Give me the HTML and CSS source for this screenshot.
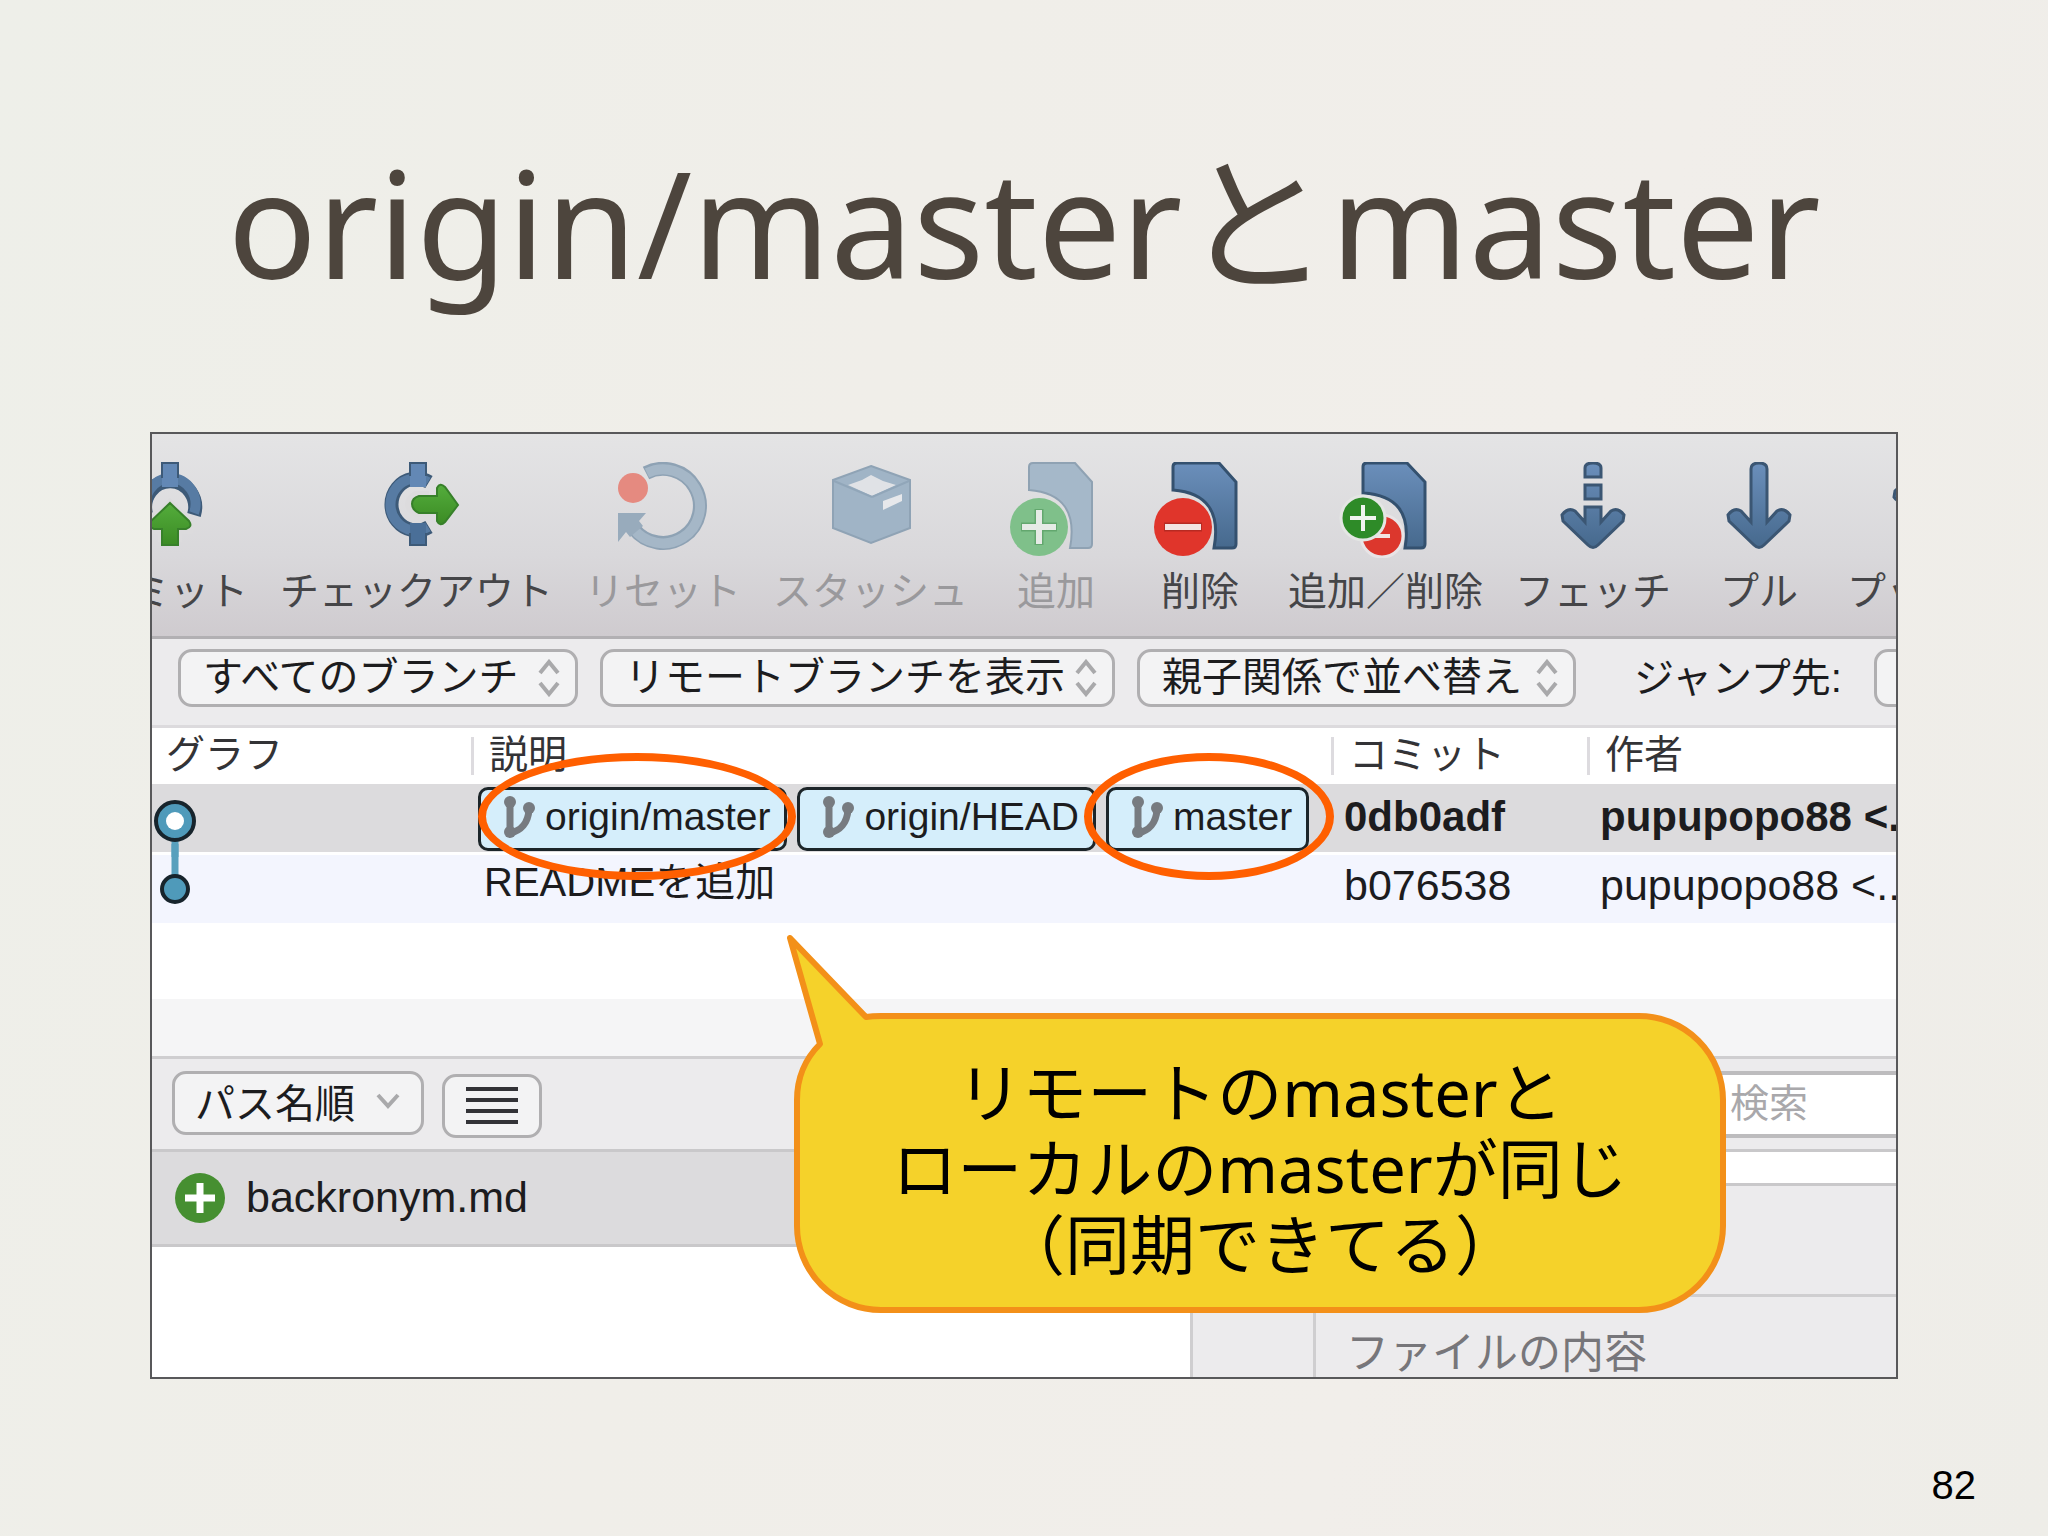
FILE: index.html
```html
<!DOCTYPE html>
<html lang="ja">
<head>
<meta charset="utf-8">
<title>origin/masterとmaster</title>
<link rel="stylesheet" href="styles.css">
</head>
<body>
<svg class="defs" aria-hidden="true">
  <defs>
    <linearGradient id="steel" x1="0" y1="0" x2="0" y2="1"><stop offset="0" stop-color="#6b8fbb"/><stop offset="1" stop-color="#46698d"/></linearGradient>
    <linearGradient id="leaf" x1="0" y1="0" x2="0" y2="1"><stop offset="0" stop-color="#54ad3c"/><stop offset="1" stop-color="#3b8b24"/></linearGradient>
    <symbol id="branch" viewBox="0 0 32 44">
      <path d="M7 7V36M7 38C18 36 25 28 26 15" fill="none" stroke="#777b80" stroke-width="7"/>
      <circle cx="7" cy="7" r="6" fill="#777b80"/><circle cx="26" cy="13" r="6" fill="#777b80"/><circle cx="7" cy="37" r="6" fill="#777b80"/>
    </symbol>
    <symbol id="updown" viewBox="0 0 24 38">
      <path d="M3 14L12 3L21 14M3 24L12 35L21 24" fill="none" stroke="#a9a9ab" stroke-width="4"/>
    </symbol>
  </defs>
</svg>
<main class="slide">
  <h1 class="title">origin/masterとmaster</h1>

  <section class="window">
    <div class="toolbar">
      <button class="tool">
        <svg class="icon" viewBox="0 0 96 96"><path d="M24 52A25 26 0 1 1 72 53" fill="none" stroke="#3d5a78" stroke-width="14"/><path d="M25 51A25 26 0 1 1 72 51" fill="none" stroke="#577ba3" stroke-width="10"/><path d="M40 1h16v24H40z" fill="#6388b5"/><path d="M40 16V1H56V16" fill="none" stroke="#3d5a78" stroke-width="2"/><path d="M48 36L76 63L70 72H60V80H36V72H26L20 63Z" fill="#dcdbdd"/><path d="M48 41L67 59Q71 65 64 67H56V83H40V67H32Q25 65 29 59Z" fill="url(#leaf)" stroke="#37802a" stroke-width="2"/></svg>
        <span>コミット</span>
      </button>
      <button class="tool">
        <svg class="icon" viewBox="0 0 96 96"><path d="M60 20A25 26 0 1 0 60 65" fill="none" stroke="#3d5a78" stroke-width="14"/><path d="M59 20A25 26 0 1 0 59 65" fill="none" stroke="#577ba3" stroke-width="10"/><path d="M41 1h16v24H41z" fill="#6388b5"/><path d="M41 61h16v22H41z" fill="#4a6f98"/><path d="M41 14V1H57V14M41 71V83H57V71" fill="none" stroke="#3d5a78" stroke-width="2"/><path d="M60 29H46Q36 34 36 42T46 55H60Z" fill="#dcdbdd"/><path d="M68 34H50Q43 36 43 42T50 51H68V59Q71 65 76 60L89 43L76 25Q71 20 68 26Z" fill="url(#leaf)" stroke="#37802a" stroke-width="2"/></svg>
        <span>チェックアウト</span>
      </button>
      <button class="tool" disabled>
        <svg class="icon" viewBox="0 0 96 96"><circle cx="18" cy="26" r="15" fill="#e58a80"/><path d="M31 11A37 37 0 1 1 19 67" fill="none" stroke="#8ea2b4" stroke-width="14"/><path d="M32 11A37 37 0 1 1 18 66" fill="none" stroke="#a5b7c7" stroke-width="10"/><path d="M3 51H31L24 59L28 64L15 75L11 70L3 80Z" fill="#98abbc"/></svg>
        <span>リセット</span>
      </button>
      <button class="tool" disabled>
        <svg class="icon" viewBox="0 0 96 96"><path d="M48 4L87 18V66L48 81L10 66V18Z" fill="#a0b4c6" stroke="#8fa3b5" stroke-width="2"/><path d="M25 23L39 18L48 13L60 19L73 23L49 34Z" fill="#e0e2e6"/><path d="M49 35L11 19M49 35L86 19" stroke="#91a6b9" stroke-width="2"/><path d="M60 39L79 32V39L60 48Z" fill="#e7e8eb"/></svg>
        <span>スタッシュ</span>
      </button>
      <button class="tool" disabled>
        <svg class="icon" viewBox="0 0 96 96"><path d="M21 28V5Q21 1 25 1H67L84 20V82Q84 86 80 86H62Q72 32 21 28Z" fill="#a5b8c9" stroke="#8fa2b3" stroke-width="2"/><circle cx="31" cy="65" r="29" fill="#7fc08a"/><path d="M31 47V83M13 65H49" stroke="#63a76e" stroke-width="9"/><path d="M31 48V82M14 65H48" stroke="#e6ebe6" stroke-width="6"/></svg>
        <span>追加</span>
      </button>
      <button class="tool">
        <svg class="icon" viewBox="0 0 96 96"><path d="M21 28V5Q21 1 25 1H67L84 20V82Q84 86 80 86H62Q72 32 21 28Z" fill="url(#steel)" stroke="#34516f" stroke-width="3"/><circle cx="31" cy="65" r="29" fill="#e0352b"/><path d="M12 65H50" stroke="#b72a22" stroke-width="9"/><path d="M13 65H49" stroke="#f3e4e2" stroke-width="6"/></svg>
        <span>削除</span>
      </button>
      <button class="tool">
        <svg class="icon" viewBox="0 0 96 96"><path d="M25 31V5Q25 1 29 1H69L87 20V82Q87 86 83 86H67Q76 34 25 31Z" fill="url(#steel)" stroke="#34516f" stroke-width="3"/><circle cx="44" cy="74" r="21" fill="#dc372d" stroke="#e8e4e6" stroke-width="3"/><path d="M36 74H52" stroke="#f3e4e2" stroke-width="4"/><circle cx="25" cy="56" r="22" fill="#2e8b28" stroke="#e4e6e4" stroke-width="3"/><path d="M25 43V69M12 56H38" stroke="#f0f5f0" stroke-width="4"/></svg>
        <span>追加／削除</span>
      </button>
      <button class="tool">
        <svg class="icon" viewBox="0 0 96 96"><path d="M40 15V6Q40 1 48 1T56 6V15ZM40 23h16v14H40zM40 45H56V60L66 49Q73 45 79 53L78 59L53 83Q48 88 43 83L18 59L17 53Q23 45 30 49L40 60Z" fill="url(#steel)" stroke="#3b5673" stroke-width="3"/></svg>
        <span>フェッチ</span>
      </button>
      <button class="tool">
        <svg class="icon" viewBox="0 0 96 96"><path d="M40 7Q40 1 48 1T56 7V60L66 49Q73 45 79 53L78 59L53 83Q48 88 43 83L18 59L17 53Q23 45 30 49L40 60Z" fill="url(#steel)" stroke="#3b5673" stroke-width="3"/></svg>
        <span>プル</span>
      </button>
      <button class="tool">
        <svg class="icon" viewBox="0 0 96 96"><path d="M40 81Q40 87 48 87T56 81V28L66 39Q73 43 79 35L78 29L53 5Q48 0 43 5L18 29L17 35Q23 43 30 39L40 28Z" fill="url(#steel)" stroke="#3b5673" stroke-width="3"/></svg>
        <span>プッシュ</span>
      </button>
    </div>

    <div class="filters">
      <div class="picker"><select aria-label="ブランチ"><option>すべてのブランチ</option></select><svg class="chevron"><use href="#updown"/></svg></div>
      <div class="picker wide"><select aria-label="リモート"><option>リモートブランチを表示</option></select><svg class="chevron"><use href="#updown"/></svg></div>
      <div class="picker medium"><select aria-label="並べ替え"><option>親子関係で並べ替え</option></select><svg class="chevron"><use href="#updown"/></svg></div>
      <label class="jump" for="jump">ジャンプ先:</label>
      <input class="jump-field" id="jump" type="text">
    </div>

    <table class="log">
      <colgroup><col class="col-graph"><col><col class="col-commit"><col class="col-author"></colgroup>
      <thead>
        <tr><th>グラフ</th><th>説明</th><th>コミット</th><th>作者</th></tr>
      </thead>
      <tbody>
        <tr class="selected">
          <td class="graph"><svg viewBox="0 0 46 66"><path d="M23 36V72" stroke="#58a0bd" stroke-width="7"/><circle cx="23" cy="36" r="19" fill="#4f9aba" stroke="#17242c" stroke-width="4"/><circle cx="23" cy="36" r="9" fill="#fff"/></svg></td>
          <td class="refs"><div class="tags">
            <span class="tag ringed"><svg><use href="#branch"/></svg>origin/master</span>
            <span class="tag"><svg><use href="#branch"/></svg>origin/HEAD</span>
            <span class="tag ringed ringed-wide"><svg><use href="#branch"/></svg>master</span>
          </div></td>
          <td>0db0adf</td>
          <td>pupupopo88 &lt;...</td>
        </tr>
        <tr class="striped">
          <td class="graph"><svg viewBox="0 0 46 66"><path d="M23 -12V34" stroke="#58a0bd" stroke-width="7"/><circle cx="23" cy="33" r="13" fill="#4f9aba" stroke="#17242c" stroke-width="4"/></svg></td>
          <td class="message">READMEを追加</td>
          <td>b076538</td>
          <td>pupupopo88 &lt;...</td>
        </tr>
      </tbody>
    </table>
    <div class="blank"></div>
    <div class="strip"></div>

    <div class="filebar">
      <button class="sort">パス名順<svg viewBox="0 0 26 20"><path d="M3 4L13 15L23 4" fill="none" stroke="#a9a9ab" stroke-width="4"/></svg></button>
      <button class="list" aria-label="一覧"><svg viewBox="0 0 52 40"><path d="M0 3H52M0 14H52M0 25H52M0 36H52" stroke="#333337" stroke-width="4"/></svg></button>
      <input class="search" type="search" placeholder="検索" aria-label="検索">
    </div>

    <div class="panes">
      <div class="files">
        <div class="file"><svg viewBox="0 0 52 52"><circle cx="26" cy="26" r="25" fill="#468f31"/><path d="M26 11V41M11 26H41" stroke="#fff" stroke-width="7"/></svg>backronym.md</div>
      </div>
      <div class="detail">
        <div class="detail-gap"></div>
        <div class="detail-head"></div>
        <div class="detail-body"><div class="content">ファイルの内容</div></div>
      </div>
    </div>

    <div class="callout">
      <svg class="bubble" viewBox="0 0 932 300"><path d="M72 4Q78 3 87 3H845A84 84 0 0 1 929 87V213A84 84 0 0 1 845 297H87A84 84 0 0 1 3 213V87Q3 54 26 31L-4 -75Z" fill="#f5d22a" stroke="#f39019" stroke-width="6" stroke-linejoin="round"/></svg>
      <p>リモートのmasterと<br>ローカルのmasterが同じ<br>（同期できてる）</p>
    </div>
  </section>

  <footer class="page-number">82</footer>
</main>
</body>
</html>
```
FILE: styles.css
```css
* {
  box-sizing: border-box;
}

body {
  margin: 0;
  background: linear-gradient(105deg, #eeefe9 0%, #f0eee9 40%, #f1eeea 70%, #eeede8 100%);
  color: #1c1c1e;
  font-family: "Liberation Sans", "Noto Sans CJK JP", sans-serif;
  font-size: 39px;
}

button,
input,
select {
  margin: 0;
  color: inherit;
  font: inherit;
}

.defs {
  position: absolute;
  width: 0;
  height: 0;
}

.slide {
  display: flex;
  flex-direction: column;
  min-height: 100vh;
  padding: 0 150px;
}

.title {
  margin: 0;
  padding-top: 115px;
  height: 432px;
  color: #4d453d;
  font-family: "Noto Sans", "Noto Sans CJK JP", sans-serif;
  font-size: 148px;
  font-weight: 400;
  line-height: 214px;
  text-align: center;
  white-space: nowrap;
}

.window {
  position: relative;
  overflow: hidden;
  border: 2px solid #58585a;
  background: #fff;
}

/* Toolbar */

.toolbar {
  display: flex;
  gap: 32px;
  height: 205px;
  padding: 28px 0 0;
  border-bottom: 3px solid #b2b0b3;
  background: linear-gradient(#e4e4e5, #d9d8db 60%, #cfcbcf);
}

.tool {
  display: flex;
  flex: none;
  flex-direction: column;
  align-items: center;
  justify-content: flex-start;
  min-width: 112px;
  padding: 0;
  border: 0;
  background: none;
  color: #454548;
  line-height: 68px;
  white-space: nowrap;
}

.tool:first-child {
  margin-left: -60px;
}

.tool:disabled {
  color: #9a999c;
}

.icon {
  width: 96px;
  height: 96px;
}

/* Filters */

.filters {
  display: flex;
  align-items: flex-start;
  gap: 22px;
  height: 89px;
  padding: 10px 0 0 26px;
  border-bottom: 3px solid #dcdadd;
  background: #ecebed;
}

.picker {
  position: relative;
  flex: none;
  width: 400px;
}

.picker.wide {
  width: 515px;
}

.picker.medium {
  width: 439px;
}

.picker select {
  width: 100%;
  height: 58px;
  padding: 0 0 2px 22px;
  border: 3px solid #b0afb1;
  border-radius: 14px;
  background: #f3f3f4;
  appearance: none;
}

.chevron {
  position: absolute;
  top: 10px;
  right: 17px;
  width: 24px;
  height: 38px;
  pointer-events: none;
}

.jump {
  flex: none;
  margin-left: 36px;
  line-height: 58px;
}

.jump-field {
  flex: none;
  width: 300px;
  height: 58px;
  margin-left: 10px;
  border: 3px solid #b0afb1;
  border-radius: 14px;
  background: #f3f3f4;
}

.picker select,
.jump {
  font-size: 40px;
}

/* Commit log */

.log {
  width: 100%;
  table-layout: fixed;
  border-collapse: collapse;
}

.col-graph {
  width: 319px;
}

.col-commit {
  width: 256px;
}

.col-author {
  width: 309px;
}

.log th {
  height: 56px;
  padding: 0 0 2px 18px;
  background: linear-gradient(#dddbdf, #dddbdf) left center / 3px 38px no-repeat;
  color: #333336;
  font-weight: 400;
  line-height: 54px;
  text-align: left;
}

.log th:first-child {
  padding-left: 14px;
  background: none;
}

.log td {
  height: 69px;
  padding: 0 0 0 13px;
  font-size: 42px;
  line-height: 60px;
  white-space: nowrap;
}

.log .selected td {
  padding-bottom: 2px;
  border-bottom: 3px solid #fff;
  background: #dcdbdd;
  background-clip: padding-box;
  font-weight: 700;
}

.log .striped td {
  padding-bottom: 8px;
  background: #f3f5fe;
  font-size: 43px;
}

.log .selected .graph,
.log .striped .graph {
  padding: 0;
}

.graph svg {
  display: block;
  width: 46px;
  height: 66px;
  overflow: visible;
}

.log .striped .message {
  padding: 0 0 14px 13px;
  font-size: 40px;
  line-height: 52px;
}

.log .selected .refs {
  padding: 2px 0 0 7px;
}

.tags {
  display: flex;
  gap: 10px;
}

.tag {
  position: relative;
  display: flex;
  align-items: center;
  gap: 10px;
  height: 64px;
  padding: 0 14px 4px 22px;
  border: 3px solid #1c2529;
  border-radius: 10px;
  background: #d5eefb;
  font-size: 39px;
  font-weight: 400;
}

.tag svg {
  width: 32px;
  height: 44px;
}

/* Rings around the two matching branches */

.ringed::after {
  content: "";
  position: absolute;
  z-index: 2;
  inset: -37px -12px -32px -3px;
  border: 8px solid #ff5f00;
  border-radius: 50%;
}

.ringed-wide::after {
  right: -28px;
  left: -25px;
}

.blank {
  height: 76px;
}

.strip {
  height: 57px;
  background: #f5f5f6;
}

/* File list controls */

.filebar {
  display: flex;
  align-items: flex-start;
  gap: 18px;
  height: 96px;
  padding: 12px 0 0 20px;
  border-top: 3px solid #cfced0;
  border-bottom: 3px solid #c9c8ca;
  background: #ecebed;
}

.sort,
.list {
  display: flex;
  align-items: center;
  height: 64px;
  border: 3px solid #b0afb1;
  border-radius: 14px;
  background: #f3f3f4;
}

.sort {
  gap: 20px;
  width: 252px;
  padding: 0 0 4px 20px;
  font-size: 40px;
  white-space: nowrap;
}

.sort svg {
  width: 26px;
  height: 20px;
}

.list {
  justify-content: center;
  width: 100px;
  margin-top: 3px;
  padding: 0;
}

.list svg {
  width: 52px;
  height: 40px;
}

.search {
  flex: none;
  width: 300px;
  height: 67px;
  margin-left: auto;
  padding: 0 0 0 134px;
  border: solid #bdbcbe;
  border-width: 4px 0;
  border-radius: 0;
  background: #fff;
  appearance: none;
}

.search::placeholder {
  color: #a9a8ab;
}

/* Lower panes */

.panes {
  display: flex;
  height: 225px;
}

.files {
  flex: 1;
}

.file {
  display: flex;
  align-items: center;
  gap: 20px;
  height: 95px;
  padding-left: 22px;
  border-bottom: 3px solid #c9c8ca;
  background: #dcdbdd;
  font-size: 43px;
}

.file svg {
  width: 52px;
  height: 52px;
}

.detail {
  display: flex;
  flex-direction: column;
  width: 706px;
  border-left: 3px solid #cfced0;
  background: #ecebed;
}

.detail-gap {
  height: 34px;
  border-bottom: 3px solid #c9c8ca;
  background: #fff;
}

.detail-head {
  height: 111px;
  border-bottom: 3px solid #cfced0;
}

.detail-body {
  flex: 1;
  min-height: 0;
  padding-left: 120px;
}

.content {
  height: 100%;
  padding-left: 30px;
  border-left: 3px solid #cfced0;
  color: #77767a;
  font-size: 43px;
  line-height: 112px;
}

/* Speech bubble */

.callout {
  position: absolute;
  z-index: 3;
  right: 170px;
  bottom: 64px;
  display: flex;
  align-items: center;
  justify-content: center;
  width: 932px;
  height: 300px;
}

.bubble {
  position: absolute;
  inset: 0;
  width: 100%;
  height: 100%;
  overflow: visible;
}

.callout p {
  position: relative;
  margin: 0;
  padding-top: 10px;
  color: #000;
  font-family: "Noto Sans", "Noto Sans CJK JP", sans-serif;
  font-size: 65px;
  line-height: 76px;
  text-align: center;
  white-space: nowrap;
}

.page-number {
  align-self: flex-end;
  margin: 82px -78px 0 0;
  color: #000;
  font-family: "Liberation Sans", sans-serif;
  font-size: 40px;
  line-height: 48px;
}
```
